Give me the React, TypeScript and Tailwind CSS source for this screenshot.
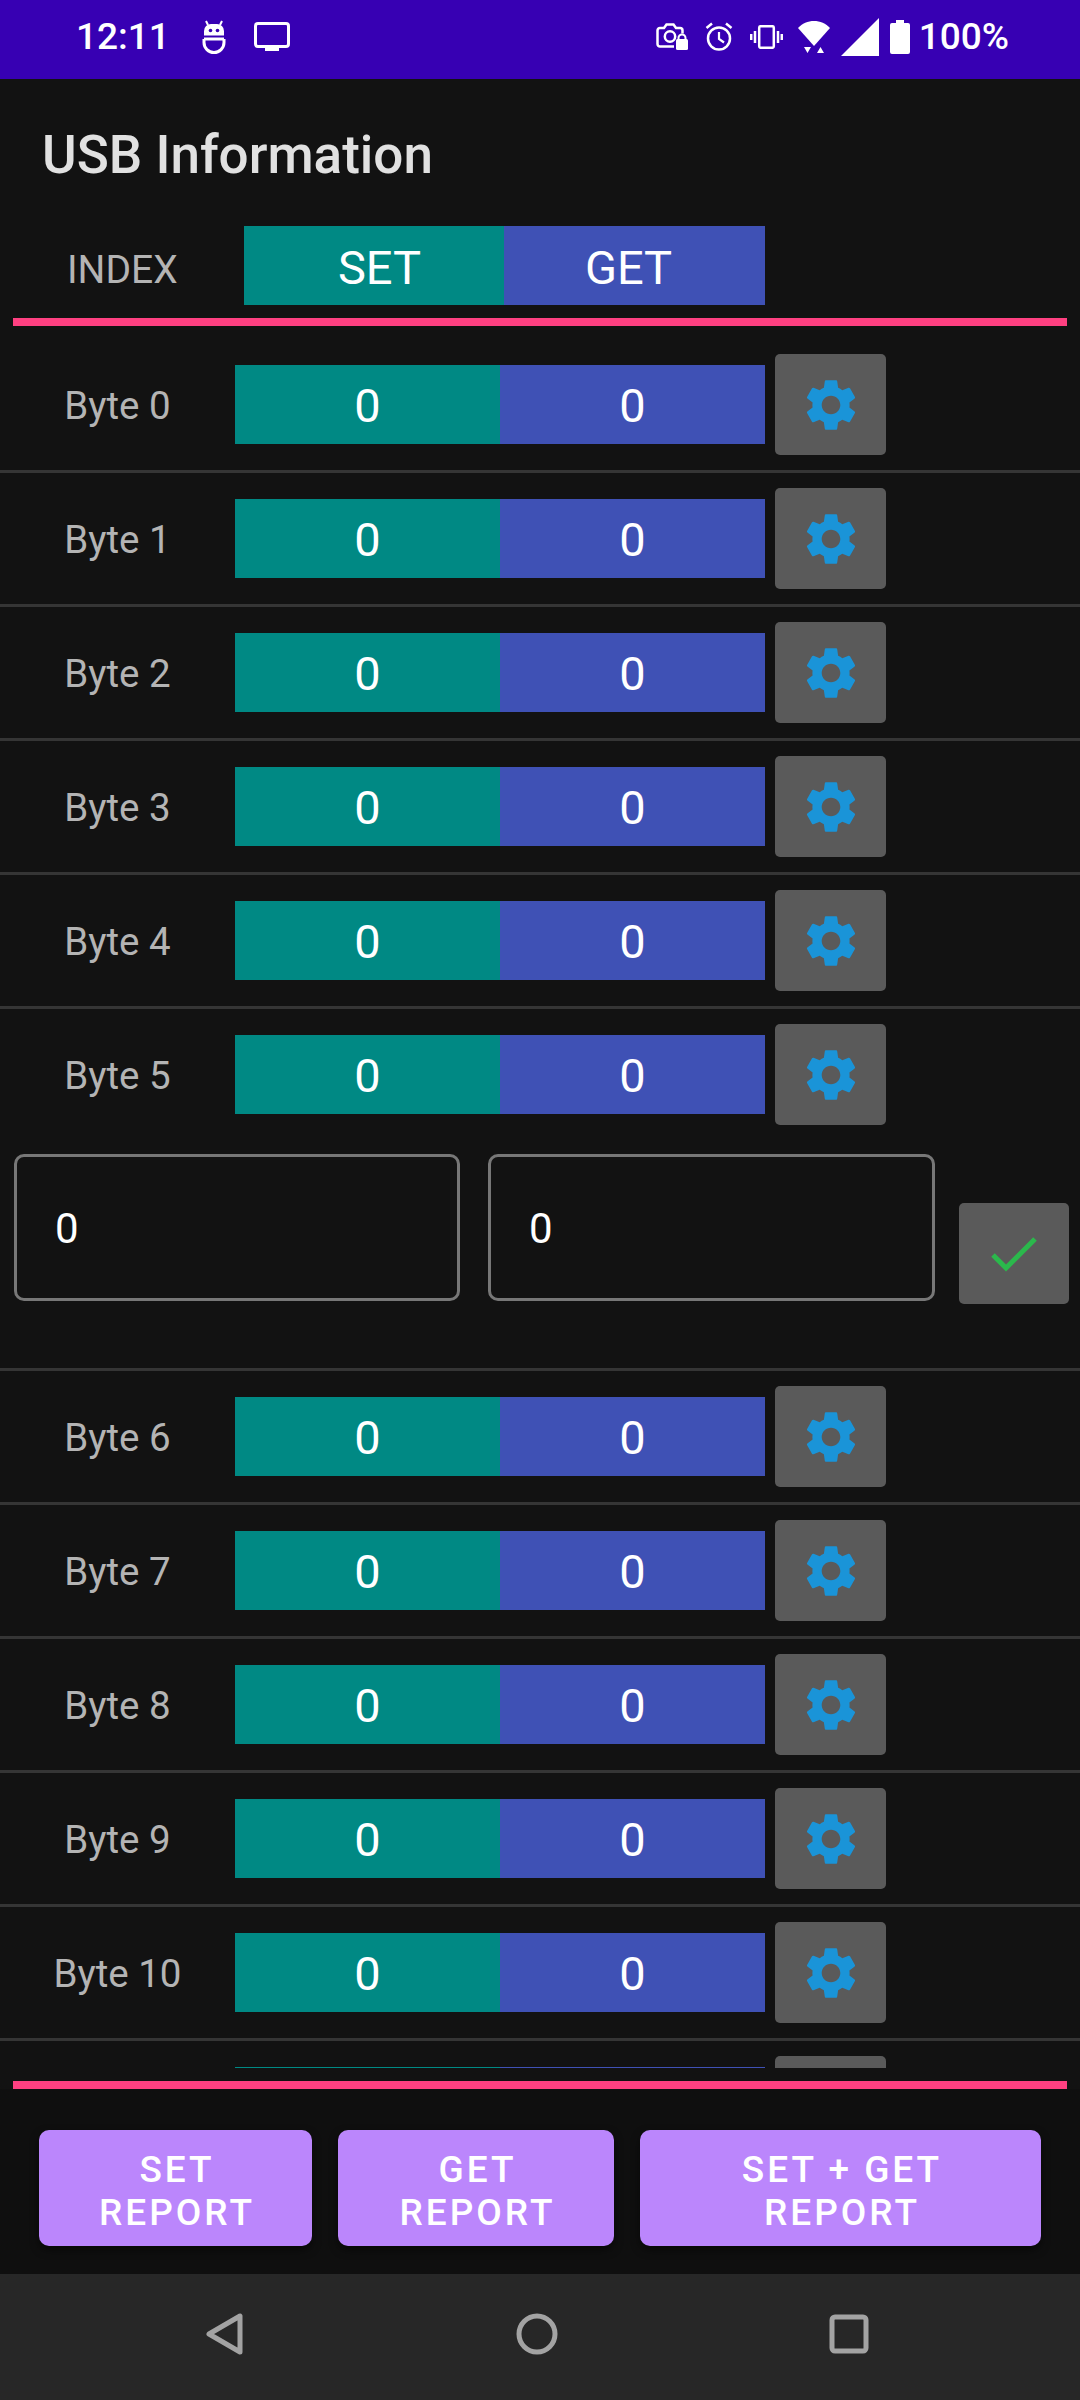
import React from "react";

const GEAR =
  "M19.14 12.94c.04-.3.06-.61.06-.94 0-.32-.02-.64-.07-.94l2.03-1.58c.18-.14.23-.41.12-.61l-1.92-3.32c-.12-.22-.37-.29-.59-.22l-2.39.96c-.5-.38-1.03-.7-1.62-.94l-.36-2.54c-.04-.24-.24-.41-.48-.41h-3.84c-.24 0-.43.17-.47.41l-.36 2.54c-.59.24-1.13.57-1.62.94l-2.39-.96c-.22-.08-.47 0-.59.22L2.74 8.87c-.12.21-.08.47.12.61l2.03 1.58c-.05.3-.09.63-.09.94s.02.64.07.94l-2.03 1.58c-.18.14-.23.41-.12.61l1.92 3.32c.12.22.37.29.59.22l2.39-.96c.5.38 1.03.7 1.62.94l.36 2.54c.05.24.24.41.48.41h3.84c.24 0 .44-.17.47-.41l.36-2.54c.59-.24 1.13-.56 1.62-.94l2.39.96c.22.08.47 0 .59-.22l1.92-3.32c.12-.22.07-.47-.12-.61l-2.01-1.58zM12 15.6c-1.98 0-3.6-1.62-3.6-3.6s1.62-3.6 3.6-3.6 3.6 1.62 3.6 3.6-1.62 3.6-3.6 3.6z";

function Gear() {
  return (
    <svg width="62" height="62" viewBox="0 0 24 24" fill="#1a94d8">
      <path d={GEAR} />
    </svg>
  );
}

function RobotIcon() {
  return (
    <svg width="24" height="34" viewBox="0 0 24 34" fill="none" stroke="#fff" strokeWidth="3" className="ml-[32px]">
      <path d="M4 1l2 4M20 1l-2 4" strokeWidth="2" />
      <path d="M2 15.5V11a7 7 0 0 1 7-7h6a7 7 0 0 1 7 7v4.5z" fill="#fff" stroke="none" />
      <circle cx="8.5" cy="10.5" r="1.8" fill="#3700b3" stroke="none" />
      <circle cx="15.5" cy="10.5" r="1.8" fill="#3700b3" stroke="none" />
      <path d="M2 19h20M2 19v3.5a10 10 0 0 0 20 0V19" />
    </svg>
  );
}

function TvIcon() {
  return (
    <svg width="36" height="30" viewBox="0 0 36 30" className="ml-[28px]">
      <rect x="1.5" y="1.5" width="33" height="23" rx="2.5" fill="none" stroke="#fff" strokeWidth="3" />
      <rect x="11" y="25" width="14" height="4" fill="#fff" />
    </svg>
  );
}

function CameraLock() {
  return (
    <svg width="32" height="28" viewBox="0 0 32 28" fill="none" stroke="#fff" strokeWidth="2.5">
      <path d="M18 23.5H4a2.5 2.5 0 0 1-2.5-2.5V7.5A2.5 2.5 0 0 1 4 5h4l2.5-3.5h7L20 5h4a2.5 2.5 0 0 1 2.5 2.5v3" />
      <circle cx="14" cy="13.5" r="5.2" />
      <rect x="20" y="16" width="12" height="11" rx="1.5" fill="#fff" stroke="none" />
      <path d="M22.5 17v-2a3.5 3.5 0 0 1 7 0v2" strokeWidth="2" />
    </svg>
  );
}

function Alarm() {
  return (
    <svg width="28" height="29" viewBox="0 0 28 29" fill="none" stroke="#fff" strokeWidth="2.5" className="ml-[17px]">
      <circle cx="14" cy="16.5" r="11" />
      <path d="M14 10v7l5 3.5" strokeWidth="2.2" />
      <path d="M7 1.5 1.5 6M21 1.5 26.5 6" />
    </svg>
  );
}

function Vibrate() {
  return (
    <svg width="33" height="24" viewBox="0 0 33 24" fill="none" stroke="#fff" strokeWidth="2.5" className="ml-[17px]">
      <rect x="9.2" y="1.2" width="14.6" height="21.6" rx="1.5" />
      <path d="M5 6v12M1.2 9v6M28 6v12M31.8 9v6" />
    </svg>
  );
}

function Wifi() {
  return (
    <svg width="32" height="34" viewBox="0 0 32 34" fill="#fff" className="ml-[15px]">
      <path d="M0 8C8 -1.5 24 -1.5 32 8L16 26z" />
      <path d="M6 27h7l-3.5 6zM19 33l3.5-6 3.5 6z" />
    </svg>
  );
}

function Signal() {
  return (
    <svg width="38" height="38" viewBox="0 0 38 38" fill="#fff" className="ml-[11px]">
      <path d="M38 0v38H0z" />
    </svg>
  );
}

function Battery() {
  return (
    <svg width="20" height="34" viewBox="0 0 20 34" fill="#fff" className="ml-[11px]">
      <path d="M6 0h8v3h4a2 2 0 0 1 2 2v27a2 2 0 0 1-2 2H2a2 2 0 0 1-2-2V5a2 2 0 0 1 2-2h4z" />
    </svg>
  );
}

function StatusBar() {
  return (
    <div className="h-[79px] shrink-0 bg-[#3700b3] flex items-center pb-[6px] pl-[76px] pr-[71px] text-white text-[37px] leading-none font-['Roboto',sans-serif]">
      <span className="font-medium">12:11</span>
      <RobotIcon />
      <TvIcon />
      <div className="flex-1" />
      <CameraLock />
      <Alarm />
      <Vibrate />
      <Wifi />
      <Signal />
      <Battery />
      <span className="ml-[9px] font-medium">100%</span>
    </div>
  );
}

function PinkLine() {
  return <div className="h-[8px] mx-[13px] shrink-0 bg-[#ff4081]" />;
}

function SettingsButton() {
  return (
    <div className="w-[111px] h-[101px] ml-[10px] rounded-[5px] bg-[#5a5a5a] flex items-center justify-center">
      <Gear />
    </div>
  );
}

function ByteRow({ index }: { index: number }) {
  return (
    <div className="h-[131px] flex items-center">
      <div className="w-[235px] pt-[3px] text-center text-[38.5px] text-[#b4b4b4]">Byte {index}</div>
      <div className="w-[265px] h-[79px] pt-[3px] bg-[#008984] flex items-center justify-center text-white text-[47px]">0</div>
      <div className="w-[265px] h-[79px] pt-[3px] bg-[#3f51b5] flex items-center justify-center text-white text-[47px]">0</div>
      <SettingsButton />
    </div>
  );
}

function Divider() {
  return <div className="h-[3px] bg-[#353535]" />;
}

function ValueInput({ className }: { className: string }) {
  return (
    <div className={`h-[147px] rounded-[10px] border-[3px] border-[#777777] flex items-center pl-[38px] pt-[2px] text-white text-[42px] ${className}`}>
      0
    </div>
  );
}

function EditPanel() {
  return (
    <div className="h-[228px] pt-[14px] pl-[14px] flex items-start">
      <ValueInput className="w-[446px]" />
      <ValueInput className="w-[447px] ml-[28px]" />
      <div className="w-[110px] h-[101px] mt-[49px] ml-[24px] rounded-[5px] bg-[#5a5a5a] flex items-center justify-center">
        <svg width="46" height="36" viewBox="0 0 46 36" fill="none" stroke="#2bb84c" strokeWidth="5">
          <path d="M2 19l13 13L44 3" />
        </svg>
      </div>
    </div>
  );
}

function ReportButton({ top, className }: { top: string; className: string }) {
  return (
    <div className={`h-[116px] rounded-[10px] pt-[5px] pl-[3px] bg-[#bb86fc] flex flex-col items-center justify-center text-white text-[37px] leading-[43px] font-medium tracking-[3px] shadow-[0_4px_8px_rgba(0,0,0,0.5)] ${className}`}>
      <span>{top}</span>
      <span>REPORT</span>
    </div>
  );
}

function NavBar() {
  return (
    <div className="h-[126px] shrink-0 bg-[#272727] flex items-start pt-[38px] pl-[205px]">
      <svg width="40" height="44" viewBox="0 0 40 44" fill="none" stroke="#a3a3a3" strokeWidth="5" strokeLinejoin="round">
        <path d="M35 4v36L4 22z" />
      </svg>
      <svg width="44" height="44" viewBox="0 0 44 44" fill="none" stroke="#a3a3a3" strokeWidth="5" className="ml-[270px]">
        <circle cx="22" cy="22" r="18" />
      </svg>
      <svg width="40" height="40" viewBox="0 0 40 40" fill="none" stroke="#a3a3a3" strokeWidth="5" className="ml-[270px] mt-[2px]">
        <rect x="3" y="3" width="34" height="34" rx="3" />
      </svg>
    </div>
  );
}

export default function App() {
  return (
    <div className="w-[1080px] h-[2400px] flex flex-col overflow-hidden bg-[#121212] font-['Roboto',sans-serif]">
      <StatusBar />
      <div className="h-[147px] shrink-0 pl-[42px] pt-[45px] text-[53px] leading-[62px] font-medium text-[#e1e1e1]">
        USB Information
      </div>
      <div className="h-[92px] shrink-0 flex">
        <div className="w-[244px] pt-[19px] pl-[67px] text-[39px] leading-[50px] text-[#b4b4b4]">INDEX</div>
        <div className="w-[260px] h-[79px] pt-[6px] pl-[11px] bg-[#008984] flex items-center justify-center text-white text-[47px]">SET</div>
        <div className="w-[261px] h-[79px] pt-[6px] pr-[12px] bg-[#3f51b5] flex items-center justify-center text-white text-[47px]">GET</div>
      </div>
      <PinkLine />
      <div className="h-[1755px] shrink-0 pt-[13px] pb-[13px]">
        <div className="h-full overflow-hidden">
          {[0, 1, 2, 3, 4, 5].map((i) => (
            <React.Fragment key={i}>
              <ByteRow index={i} />
              {i < 5 && <Divider />}
            </React.Fragment>
          ))}
          <EditPanel />
          <Divider />
          {[6, 7, 8, 9, 10].map((i) => (
            <React.Fragment key={i}>
              <ByteRow index={i} />
              <Divider />
            </React.Fragment>
          ))}
          <div className="h-[29px] flex items-start pt-[15px]">
            <div className="w-[235px]" />
            <div className="w-[265px] h-[14px] mt-[11px] bg-[#008984]" />
            <div className="w-[265px] h-[14px] mt-[11px] bg-[#3f51b5]" />
            <div className="w-[111px] h-[14px] ml-[10px] rounded-t-[5px] bg-[#5a5a5a]" />
          </div>
        </div>
      </div>
      <PinkLine />
      <div className="h-[185px] shrink-0 bg-[#0f0f0f] pt-[41px] pl-[39px] flex">
        <ReportButton top="SET" className="w-[273px]" />
        <ReportButton top="GET" className="w-[276px] ml-[26px]" />
        <ReportButton top="SET + GET" className="w-[401px] ml-[26px]" />
      </div>
      <NavBar />
    </div>
  );
}
